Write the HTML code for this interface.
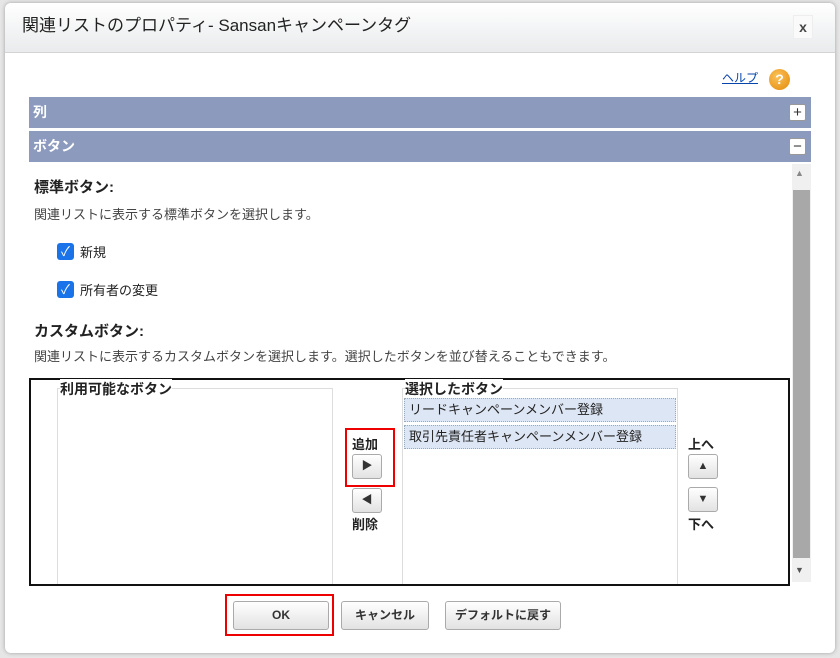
<!DOCTYPE html>
<html><head><meta charset="utf-8"><style>
*{box-sizing:border-box;margin:0;padding:0}
body{width:840px;height:658px;background:#e6e6e6;font-family:"Liberation Sans","Noto Sans CJK JP",sans-serif;position:relative;overflow:hidden;color:#222}
.a{position:absolute}
.dlg{left:5px;top:3px;width:830px;height:650px;background:#fff;border-radius:6px;box-shadow:0 0 4px rgba(0,0,0,.3)}
.title{left:5px;top:3px;width:830px;height:50px;background:linear-gradient(#fff,#e9ebec);border-radius:6px 6px 0 0;border-bottom:1px solid #d4d4d4}
.bar{left:29px;width:782px;height:31px;background:#8c9bbd;color:#fff;font-weight:bold;font-size:14px;line-height:31px;padding-left:4px}
.pm{right:5px;top:7px;width:17px;height:17px;background:#fff;border:1px solid #999;border-radius:2px;color:#333;font-size:15px;line-height:15px;text-align:center;font-weight:normal}
.btn{background:linear-gradient(#fff,#e2e2e2);border:1px solid #aaa;border-radius:3px;font-size:12px;font-weight:bold;text-align:center;color:#333}
.cb{width:17px;height:17px;background:#1a73e8;border-radius:3px;color:#fff;font-size:13px;line-height:17px;text-align:center}
.item{left:404px;width:272px;height:24px;background:#dde6f4;border:1px dotted #9ab;font-size:13px;line-height:22px;padding-left:4px}
.ab{width:30px;height:25px;line-height:23px;font-size:11px}
</style></head><body>
<div class="a dlg"></div>
<div class="a title"></div>
<div class="a" style="left:22px;top:11px;font-size:17px;color:#222">関連リストのプロパティ- Sansanキャンペーンタグ</div>
<div class="a" style="left:793px;top:15px;width:20px;height:24px;background:#fafafa;border:1px solid #eee;font-size:14px;text-align:center;line-height:22px;font-weight:bold;color:#444">x</div>
<div class="a" style="left:722px;top:69px;font-size:12px;color:#0645ad;text-decoration:underline">ヘルプ</div>
<div class="a" style="left:769px;top:69px;width:21px;height:21px;border-radius:50%;background:radial-gradient(circle at 40% 35%,#fbc15a,#e38a06);color:#fff;font-weight:bold;font-size:14px;text-align:center;line-height:21px">?</div>
<div class="a bar" style="top:97px">列<div class="a pm">+</div></div>
<div class="a bar" style="top:131px">ボタン<div class="a pm">−</div></div>
<div class="a" style="left:792px;top:164px;width:19px;height:418px;background:#f0f0f0"></div>
<div class="a" style="left:793px;top:190px;width:17px;height:368px;background:#a8a8a8"></div>
<div class="a" style="left:795px;top:168px;font-size:9px;color:#888">▲</div>
<div class="a" style="left:795px;top:565px;font-size:9px;color:#555">▼</div>
<div class="a" style="left:34px;top:176px;font-size:15px;font-weight:bold">標準ボタン:</div>
<div class="a" style="left:34px;top:204px;font-size:13px;color:#444">関連リストに表示する標準ボタンを選択します。</div>
<div class="a cb" style="left:57px;top:243px">✓</div><div class="a" style="left:80px;top:242px;font-size:13px">新規</div>
<div class="a cb" style="left:57px;top:281px">✓</div><div class="a" style="left:80px;top:280px;font-size:13px">所有者の変更</div>
<div class="a" style="left:34px;top:320px;font-size:15px;font-weight:bold">カスタムボタン:</div>
<div class="a" style="left:34px;top:346px;font-size:13px;color:#444">関連リストに表示するカスタムボタンを選択します。選択したボタンを並び替えることもできます。</div>
<div class="a" style="left:29px;top:378px;width:761px;height:208px;border:2px solid #111"></div>
<div class="a" style="left:57px;top:388px;width:276px;height:196px;border:1px solid #ddd;border-bottom:none"></div>
<div class="a" style="left:60px;top:379px;font-size:14px;font-weight:bold;background:#fff">利用可能なボタン</div>
<div class="a" style="left:402px;top:388px;width:276px;height:196px;border:1px solid #ddd;border-bottom:none"></div>
<div class="a" style="left:405px;top:379px;font-size:14px;font-weight:bold;background:#fff">選択したボタン</div>
<div class="a item" style="top:398px">リードキャンペーンメンバー登録</div>
<div class="a item" style="top:425px">取引先責任者キャンペーンメンバー登録</div>
<div class="a" style="left:345px;top:428px;width:50px;height:59px;border:2px solid #e00"></div>
<div class="a" style="left:352px;top:434px;font-size:13px;font-weight:bold">追加</div>
<div class="a btn ab" style="left:352px;top:454px">▶</div>
<div class="a btn ab" style="left:352px;top:488px">◀</div>
<div class="a" style="left:352px;top:514px;font-size:13px;font-weight:bold">削除</div>
<div class="a" style="left:688px;top:434px;font-size:13px;font-weight:bold">上へ</div>
<div class="a btn ab" style="left:688px;top:454px">▲</div>
<div class="a btn ab" style="left:688px;top:487px">▼</div>
<div class="a" style="left:688px;top:514px;font-size:13px;font-weight:bold">下へ</div>
<div class="a" style="left:225px;top:594px;width:109px;height:42px;border:2px solid #e00"></div>
<div class="a btn" style="left:233px;top:601px;width:96px;height:29px;line-height:27px">OK</div>
<div class="a btn" style="left:341px;top:601px;width:88px;height:29px;line-height:27px">キャンセル</div>
<div class="a btn" style="left:445px;top:601px;width:116px;height:29px;line-height:27px">デフォルトに戻す</div>
</body></html>
